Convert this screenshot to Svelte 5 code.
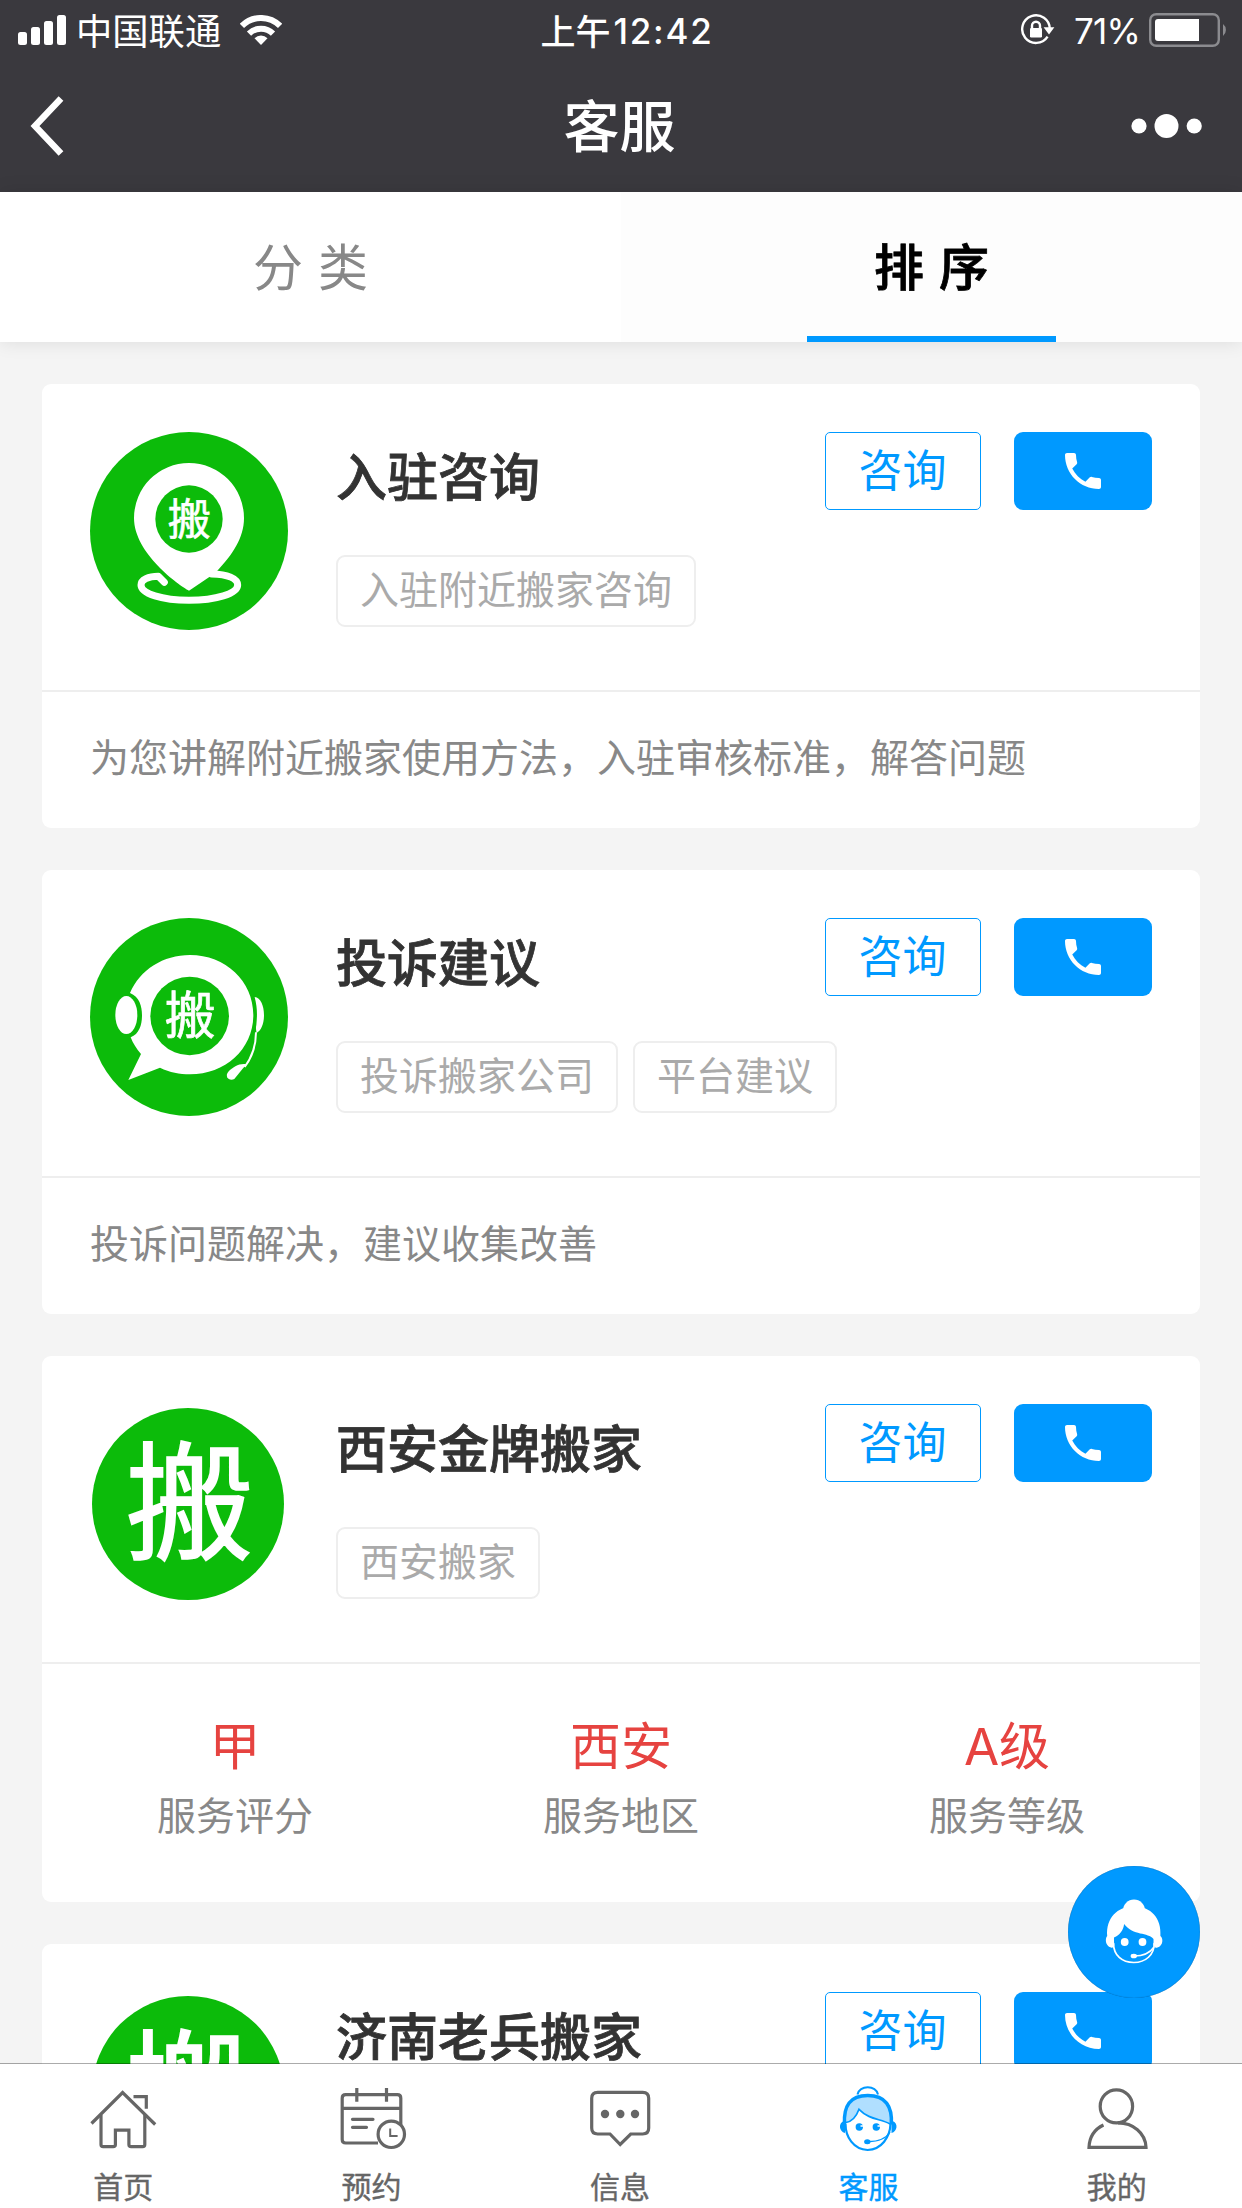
<script>
	let activeTab = 1;
	let activeNav = 3;

	const tabs = ['分 类', '排 序'];

	const services = [
		{
			logo: 'pin',
			name: '入驻咨询',
			tags: ['入驻附近搬家咨询'],
			desc: '为您讲解附近搬家使用方法，入驻审核标准，解答问题'
		},
		{
			logo: 'chat',
			name: '投诉建议',
			tags: ['投诉搬家公司', '平台建议'],
			desc: '投诉问题解决，建议收集改善'
		},
		{
			logo: 'plain',
			name: '西安金牌搬家',
			tags: ['西安搬家'],
			stats: [
				{ value: '甲', label: '服务评分' },
				{ value: '西安', label: '服务地区' },
				{ value: 'A级', label: '服务等级' }
			]
		},
		{
			logo: 'plain',
			name: '济南老兵搬家',
			tags: [],
			stats: []
		}
	];

	const nav = [
		{ icon: 'home', label: '首页' },
		{ icon: 'calendar', label: '预约' },
		{ icon: 'message', label: '信息' },
		{ icon: 'service', label: '客服' },
		{ icon: 'user', label: '我的' }
	];
</script>

<div class="app">
	<header>
		<div class="status">
			<div class="side">
				<svg width="48" height="30" viewBox="0 0 48 30" fill="#fff">
					<rect x="0" y="17" width="9" height="13" rx="2.5" />
					<rect x="13" y="12" width="9" height="18" rx="2.5" />
					<rect x="26" y="6" width="9" height="24" rx="2.5" />
					<rect x="39" y="0" width="9" height="30" rx="2.5" />
				</svg>
				<span class="carrier">中国联通</span>
				<svg width="42" height="30" viewBox="0 0 42 30" fill="none" stroke="#fff" stroke-width="6">
					<path d="M1.9 10.9a27 27 0 0 1 38.2 0" />
					<path d="M9 18.6a17 17 0 0 1 24 0" />
					<path d="M21 30l-6.5-6.7a9.2 9.2 0 0 1 13 0z" fill="#fff" stroke="none" />
				</svg>
			</div>
			<div class="time">上午<span>12:42</span></div>
			<div class="side right">
				<svg width="36" height="32" viewBox="0 0 36 32" fill="none" stroke="#fff" stroke-width="2.4">
					<path d="M27.6 22.6A13.8 13.8 0 1 1 29.8 15" />
					<path d="M23.6 13.2h10.8l-5.4 7.2z" fill="#fff" stroke="none" />
					<path d="M12 15v-3.2a4 4 0 0 1 8 0V15" />
					<rect x="10" y="14" width="12" height="9.5" rx="1.2" fill="#fff" stroke="none" />
				</svg>
				<span class="percent">71%</span>
				<svg width="79" height="34" viewBox="0 0 79 34">
					<rect x="1.2" y="1.2" width="68.6" height="31.6" rx="6" fill="none" stroke="#8b8b8f" stroke-width="2.4" />
					<path d="M9 6h41v22H9a3 3 0 0 1-3-3V9a3 3 0 0 1 3-3z" fill="#fff" />
					<path d="M74 11a7.6 7.6 0 0 1 0 12z" fill="#8b8b8f" />
				</svg>
			</div>
		</div>
		<div class="titlebar">
			<svg width="40" height="64" viewBox="0 0 40 64" fill="none" stroke="#fff" stroke-width="6.5">
				<path d="M34 4.5L8 32l26 27.5" />
			</svg>
			<h1>客服</h1>
			<svg class="more" width="72" height="26" viewBox="0 0 72 26" fill="#fff">
				<circle cx="8" cy="13" r="7.6" />
				<circle cx="35.5" cy="13" r="12" />
				<circle cx="63.2" cy="13" r="7.6" />
			</svg>
		</div>
	</header>

	<div class="tabs">
		{#each tabs as tab, i}
			<button class="tab" class:active={i == activeTab} on:click={() => (activeTab = i)}>
				<span>{tab}</span>
			</button>
		{/each}
	</div>

	<main>
		{#each services as s}
			<section class="card">
				<div class="top">
					<svg class="logo" viewBox="15 15 594 594">
						{#if s.logo == 'pin'}
							<circle cx="312" cy="312" r="297" fill="#0cbb0a" />
							<path d="M238 466l-18-18c-30 0-52 10-52 26 0 26 64 46 144 46s146-20 146-46c0-20-30-32-78-33" fill="none" stroke="#fff" stroke-width="21" stroke-linecap="round" stroke-linejoin="round" />
							<path d="M312 491C284 476 147 380 147 273a165 165 0 0 1 330 0c0 60-36 112-80 158l-24 19z" fill="#fff" />
							<circle cx="312" cy="276" r="101" fill="#0cbb0a" />
							<text x="313" y="324" font-size="130">搬</text>
						{:else if s.logo == 'chat'}
							<circle cx="312" cy="312" r="297" fill="#0cbb0a" />
							<path d="M135 240C165 170 235 126 315 126c106 0 190 78 190 180s-84 178-190 178c-32 0-60-6-90-20l-95 37 38-78c-14-16-24-32-31-50 26-10 34-38 34-66s-8-56-36-67z" fill="#fff" />
							<ellipse cx="124" cy="306" rx="33" ry="57" fill="#fff" />
							<path d="M509 252c18 2 28 26 28 54 0 26-8 46-22 54-2-10-3-16-1-24 3-32 3-52-5-84z" fill="#fff" />
							<path d="M513 358c0 40-10 72-34 104" fill="none" stroke="#fff" stroke-width="6" />
							<path d="M484 454c-20-4-40 8-54 22-12 14 2 30 18 22z" fill="#fff" />
							<circle cx="314" cy="309" r="118" fill="#0cbb0a" />
							<text x="316" y="364" font-size="153">搬</text>
						{:else}
							<circle cx="309" cy="315" r="288" fill="#0cbb0a" />
							<text class="big" x="314" y="453" font-size="384">搬</text>
						{/if}
					</svg>
					<div class="info">
						<h2>{s.name}</h2>
						<div class="tags">
							{#each s.tags as tag}
								<span class="tag">{tag}</span>
							{/each}
						</div>
					</div>
					<div class="actions">
						<button class="ask">咨询</button>
						<button class="call" aria-label="电话">
							<svg width="48" height="48" viewBox="0 0 24 24" fill="#fff">
								<path d="M6.62 10.79c1.44 2.83 3.76 5.14 6.59 6.59l2.2-2.2c.27-.27.67-.36 1.02-.24 1.12.37 2.33.57 3.57.57.55 0 1 .45 1 1V20c0 .55-.45 1-1 1-9.39 0-17-7.61-17-17 0-.55.45-1 1-1h3.5c.55 0 1 .45 1 1 0 1.25.2 2.45.57 3.57.11.35.03.74-.25 1.02l-2.2 2.2z" />
							</svg>
						</button>
					</div>
				</div>
				{#if s.stats}
					<div class="stats">
						{#each s.stats as stat}
							<div class="stat">
								<strong>{stat.value}</strong>
								<span>{stat.label}</span>
							</div>
						{/each}
					</div>
				{:else}
					<p class="desc">{s.desc}</p>
				{/if}
			</section>
		{/each}
	</main>

	<button class="fab" aria-label="在线客服">
		<svg width="132" height="132" viewBox="0 0 132 132">
			<circle cx="66" cy="44.5" r="11" fill="#fff" />
			<path d="M39.2 70C38 52 49 40.5 66 40.5S93.6 52 92.4 70c3 2 3 10-3 11.5-2 .5-3 0-3-2H46c-.4 2-1.5 2.5-3 2-6-1.5-6-9.5-3.8-11.5z" fill="#fff" />
			<path d="M46 71.5c6-2.5 9.5-7.5 10.1-13.5 9 12 24 8 29.4 15 .6 14-5 23.3-19.5 23.3S45.5 88 46 71.5z" fill="#09f" />
			<path d="M45.5 77c0 12.5 8.5 19.5 20.3 19.5S86.3 89 86.3 77" fill="none" stroke="#fff" stroke-width="1.7" />
			<circle cx="56.7" cy="76" r="3.9" fill="#fff" />
			<circle cx="74.5" cy="76" r="3.9" fill="#fff" />
			<ellipse cx="65.8" cy="90" rx="3.2" ry="2.3" fill="#fff" />
			<path d="M66 90c10 0 16-3 20-9" fill="none" stroke="#fff" stroke-width="1.5" />
		</svg>
	</button>

	<nav>
		{#each nav as item, i}
			<button class="item" class:active={i == activeNav} on:click={() => (activeNav = i)}>
				<svg width="72" height="72" viewBox="0 0 72 72" fill="none" stroke="currentColor" stroke-width="3.2">
					{#if item.icon == 'home'}
						<path d="M3.5 41.5L34.6 10.5l32.6 32" />
						<path d="M45.5 14.7h12.8v12" />
						<path d="M13 33v29.5q0 2.2 2.2 2.2h9.9q2.3 0 2.3-2.2V48.2h13.5v14.3q0 2.2 2.3 2.2h11.4q2.2 0 2.2-2.2V33" />
					{:else if item.icon == 'calendar'}
						<path d="M41 61H8.7q-3.5 0-3.5-3.5V16.2q0-3.5 3.5-3.5h51.6q3.5 0 3.5 3.5V43M5.2 26.3h58.6" />
						<path d="M19.8 6v13.7M49.5 6v13.7" />
						<path d="M15.5 37.3H36M15.5 45.3H29.5" stroke-linecap="round" />
						<circle cx="54.3" cy="52.3" r="13.2" />
						<path d="M53.2 46.5v7.6h7.4" stroke-width="2" />
					{:else if item.icon == 'message'}
						<path d="M12.7 10.3h45q6 0 6 6V46q0 6-6 6h-12L35.2 62.5 25 52H12.7q-6 0-6-6V16.3q0-6 6-6z" />
						<g fill="currentColor" stroke="none">
							<circle cx="20" cy="32" r="4.2" />
							<circle cx="35.3" cy="32" r="4.2" />
							<circle cx="50" cy="32" r="4.2" />
						</g>
					{:else if item.icon == 'service'}
						<path d="M24.5 12.5C26 2.8 43.5 2.8 45 12.5" stroke-width="2" />
						<path d="M11.5 42C10.5 24 17 13.5 34.7 13.5S59.5 24 58 42.5C48 36 36.5 39 26 27.3 24 34 18.5 40.5 11.5 42z" fill="#b0dfff" stroke="none" />
						<path d="M11.5 42C10.5 24 17 13.5 34.7 13.5S59.5 24 58.3 42.5" stroke-width="3.5" />
						<path d="M12.6 40.5C18 40 23 35.5 26 27.3 36.5 38 47 36.5 57 42" stroke-width="1.7" />
						<path d="M12.5 42c0 13 8 25.5 22.1 26 14-.5 22.4-13 22.9-26" stroke-width="2.2" />
						<g fill="currentColor" stroke="none">
							<path d="M12 39v12c-6-1.5-7-10-1-12zM58.5 39v12c6-1.5 7-10 1-12z" />
							<circle cx="26.3" cy="45" r="3.7" />
							<circle cx="43.3" cy="45" r="3.7" />
							<ellipse cx="34.3" cy="59.7" rx="3.2" ry="2.5" />
						</g>
						<path d="M30.5 44h-3M47.5 44h-3" stroke="#fff" stroke-width="1.5" />
						<path d="M35 59.7C45 59.5 53 57 57 50" stroke-width="1.4" />
					{:else}
						<ellipse cx="34.4" cy="24.4" rx="16.2" ry="16.5" />
						<path d="M21.5 43C13 47 7.5 55 7 65.3h57C63.5 51 51 40.9 36 40.9" />
					{/if}
				</svg>
				<span>{item.label}</span>
			</button>
		{/each}
	</nav>
</div>

<style>
	:global(body) {
		background: #f4f4f4;
	}

	.app {
		position: relative;
		display: flex;
		flex-direction: column;
		width: 1242px;
		height: 2208px;
		overflow: hidden;
		background: #f4f4f4;
		font-family: 'Noto Sans CJK SC', sans-serif;
	}

	button {
		margin: 0;
		padding: 0;
		border: none;
		background: none;
		font-family: inherit;
	}

	svg {
		display: block;
		flex: none;
	}

	header {
		height: 192px;
		flex: none;
		background: #3a393e;
		color: #fff;
	}

	.status {
		display: flex;
		align-items: center;
		height: 60px;
		padding: 0 14px 0 18px;
	}

	.side {
		display: flex;
		align-items: center;
		flex: 1;
	}

	.side.right {
		justify-content: flex-end;
	}

	.carrier {
		margin: 0 19px 0 10px;
		padding-bottom: 2px;
		font-size: 36.3px;
		line-height: 58px;
	}

	.time {
		display: flex;
		margin-left: 8px;
		font-size: 35px;
		font-weight: 500;
		line-height: 60px;
	}

	.time span {
		margin-left: 3px;
		padding-top: 1px;
		font-family: Inter, sans-serif;
		letter-spacing: 1.8px;
	}

	.percent {
		margin: 0 9px 0 18px;
		padding-top: 2px;
		font-family: Inter, sans-serif;
		font-size: 35px;
		letter-spacing: -0.8px;
		line-height: 60px;
	}

	.titlebar {
		display: grid;
		grid-template-columns: 1fr auto 1fr;
		align-items: center;
		height: 132px;
		padding: 0 39px 0 27px;
	}

	h1 {
		margin: 0 0 0 9px;
		padding-bottom: 6px;
		font-size: 56px;
		font-weight: 500;
		line-height: 126px;
	}

	.more {
		justify-self: end;
	}

	.tabs {
		position: relative;
		display: flex;
		flex: none;
		height: 150px;
		background: #fff;
		box-shadow: 0 0 18px rgba(0, 0, 0, 0.1);
	}

	.tab {
		display: flex;
		flex-direction: column;
		align-items: center;
		flex: 1;
		color: #888;
		font-size: 50px;
		line-height: 144px;
		word-spacing: 4px;
	}

	.tab.active {
		background: #fdfdfd;
		color: #000;
		font-weight: 500;
		-webkit-text-stroke: 0.8px #000;
	}

	.tab.active::after {
		content: '';
		width: 249px;
		height: 6px;
		background: #09f;
	}

	main {
		flex: 1;
		min-height: 0;
		padding: 42px 42px 0;
		overflow: hidden;
	}

	.card {
		margin-bottom: 42px;
		border-radius: 9px;
		background: #fff;
	}

	.top {
		display: flex;
		height: 306px;
		padding: 48px;
		box-sizing: border-box;
	}

	.logo {
		width: 198px;
		height: 198px;
	}

	.logo text {
		fill: #fff;
		stroke: #fff;
		stroke-width: 2px;
		text-anchor: middle;
	}

	.logo .big {
		stroke-width: 5px;
	}

	.info {
		flex: 1;
		min-width: 0;
		margin-left: 48px;
	}

	h2 {
		margin: 0;
		color: #333;
		font-size: 51px;
		font-weight: 500;
		line-height: 84px;
		white-space: nowrap;
		-webkit-text-stroke: 0.8px #333;
	}

	/* long tag rows run on under the action buttons */
	.tags {
		display: flex;
		gap: 15px;
		margin-top: 39px;
	}

	.tag {
		flex: none;
		height: 72px;
		padding: 0 22px;
		border: 2px solid #eee;
		border-radius: 9px;
		box-sizing: border-box;
		color: #aaa;
		font-size: 39px;
		line-height: 60px;
		white-space: nowrap;
	}

	.actions {
		display: flex;
		flex: none;
		gap: 33px;
	}

	.ask {
		width: 156px;
		height: 78px;
		padding: 0 1px 6px 0;
		border: 1.5px solid #09f;
		border-radius: 5px;
		color: #09f;
		font-size: 44px;
		line-height: 68px;
	}

	.call {
		display: flex;
		align-items: center;
		justify-content: center;
		width: 138px;
		height: 78px;
		border-radius: 9px;
		background: #09f;
	}

	.desc {
		height: 138px;
		margin: 0;
		padding: 0 48px;
		border-top: 2px solid #eee;
		box-sizing: border-box;
		color: #888;
		font-size: 39px;
		line-height: 126px;
	}

	.stats {
		display: flex;
		height: 240px;
		padding-top: 46px;
		border-top: 2px solid #eee;
		box-sizing: border-box;
	}

	.stat {
		display: flex;
		flex-direction: column;
		align-items: center;
		flex: 1;
	}

	.stat strong {
		color: #e64340;
		font-family: Inter, 'Noto Sans CJK SC', sans-serif;
		font-size: 51px;
		font-weight: 400;
		line-height: 74px;
	}

	.stat span {
		color: #888;
		font-size: 39px;
		line-height: 58px;
	}

	/* floats over the list, above the bottom nav */
	.fab {
		position: absolute;
		right: 42px;
		bottom: 210px;
		width: 132px;
		height: 132px;
		border-radius: 50%;
		background: #09f;
		box-shadow: inset 0 0 1px rgba(0, 0, 0, 0.5);
	}

	nav {
		position: relative;
		display: flex;
		flex: none;
		height: 145px;
		margin-top: -1px;
		border-top: 1px solid rgba(0, 0, 0, 0.33);
		box-sizing: border-box;
		background: #fff;
		background-clip: padding-box;
	}

	.item {
		display: flex;
		flex-direction: column;
		align-items: center;
		flex: 1;
		padding-top: 18px;
		color: #666;
	}

	.item.active {
		color: #09f;
	}

	.item span {
		margin: 11px 2px 0 0;
		font-size: 30px;
		line-height: 40px;
		-webkit-text-stroke: 0.4px currentColor;
	}
</style>
